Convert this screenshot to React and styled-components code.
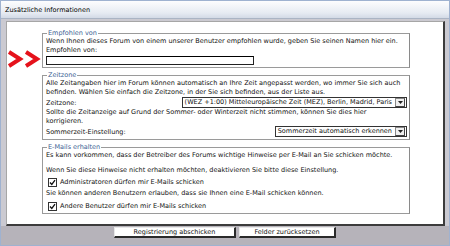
import React from "react";
import styled, { createGlobalStyle } from "styled-components";

const Global = createGlobalStyle`
  html, body { margin: 0; padding: 0; background: #fff; }
  body { font-family: "DejaVu Sans", Verdana, sans-serif; }
`;

const Frame = styled.div`
  width: 450px;
  height: 246px;
  box-sizing: border-box;
  border: 1px solid #9fb2d0;
  display: flex;
  flex-direction: column;
  background: #c9c7cd;
  font-size: 6.5px;
  color: #111;
`;

const TitleBar = styled.div`
  height: 18px;
  box-sizing: border-box;
  padding-left: 4px;
  display: flex;
  align-items: center;
  background: linear-gradient(#fdfdfe, #e6ebf2 70%, #d3dae6);
  border-bottom: 1px solid #aab4c4;
  color: #000;
`;

const Body = styled.div`
  flex: 1;
  display: flex;
  flex-direction: column;
  padding: 2px 4px 0 5px;
  background: #cbcad1;
`;

const Panel = styled.div`
  flex: 1;
  background: #fff;
  border-top: 1px solid #a6a6a6;
  border-left: 1px solid #a6a6a6;
  border-right: 2px solid #3c3c3c;
  border-bottom: 2px solid #3c3c3c;
  display: grid;
  grid-template-columns: 35px 1fr 33px;
  align-content: start;
  padding-top: 7px;
  row-gap: 3px;
`;

const Gutter = styled.div`
  grid-column: 1;
  display: flex;
  align-items: flex-end;
  justify-content: flex-end;
  padding-right: 1px;
`;

const Group = styled.fieldset`
  grid-column: 2;
  margin: 0;
  padding: 0 2px 2px 3px;
  border: 1px solid #9a9a9a;
  border-right-color: #8a8a8a;
  min-width: 0;
`;

const Legend = styled.legend`
  padding: 0 1px;
  margin-left: 1px;
  color: #3c5f94;
  line-height: 8px;
`;

const Line = styled.div`
  line-height: 9px;
  white-space: nowrap;
  margin-top: ${(p) => p.$gap || 0}px;
`;

const TextInput = styled.div`
  width: 206px;
  height: 7px;
  border: 1px solid #222;
  border-top-color: #000;
  margin-top: 1px;
  background: #fff;
`;

const Row = styled.div`
  display: flex;
  align-items: center;
  justify-content: space-between;
  height: 11px;
`;

const Select = styled.div`
  display: flex;
  align-items: center;
  height: 9px;
  border: 1px solid #333;
  background: #fff;
  padding-left: 2px;
  line-height: 9px;
  white-space: nowrap;
`;

const SelectButton = styled.span`
  margin-left: 3px;
  width: 8px;
  height: 7px;
  border: 1px solid #888;
  border-right-color: #444;
  border-bottom-color: #444;
  background: #f0f0f0;
  display: flex;
  align-items: center;
  justify-content: center;
  margin-right: 1px;
`;

const Check = styled.div`
  display: flex;
  align-items: center;
  gap: 3px;
  padding-left: 2px;
  line-height: 9px;
  margin-top: ${(p) => p.$gap || 0}px;
  margin-bottom: ${(p) => p.$after || 0}px;
`;

const Box = styled.span`
  width: 7px;
  height: 7px;
  border: 1px solid #333;
  background: #fff;
  display: flex;
  align-items: center;
  justify-content: center;
`;

const Footer = styled.div`
  height: 19px;
  display: flex;
  align-items: flex-start;
  justify-content: center;
  gap: 3px;
  background: #b6b3ba;
  margin: 0 -4px 0 -5px;
  padding-top: 1px;
  box-sizing: border-box;
`;

const Button = styled.div`
  width: ${(p) => p.$w}px;
  height: 11px;
  box-sizing: border-box;
  background: #fff;
  border: 1px solid #e8e8e8;
  border-right: 2px solid #2a2a2a;
  border-bottom: 2px solid #2a2a2a;
  display: flex;
  align-items: center;
  justify-content: center;
  color: #111;
`;

const Arrows = () => (
  <svg width="34" height="18" viewBox="0 0 34 18">
    <polyline points="2,2 13,9 2,16" fill="none" stroke="#e5121b" strokeWidth="4" strokeLinejoin="miter" />
    <polyline points="19,2 30,9 19,16" fill="none" stroke="#e5121b" strokeWidth="4" strokeLinejoin="miter" />
  </svg>
);

const Caret = () => (
  <svg width="5" height="3" viewBox="0 0 5 3">
    <polygon points="0,0 5,0 2.5,3" fill="#222" />
  </svg>
);

const Tick = () => (
  <svg width="7" height="7" viewBox="0 0 7 7">
    <polyline points="1,3.5 2.8,5.5 6,1.2" fill="none" stroke="#111" strokeWidth="1.3" />
  </svg>
);

export default function App() {
  return (
    <>
      <Global />
      <Frame>
        <TitleBar>Zusätzliche Informationen</TitleBar>
        <Body>
          <Panel>
            <Gutter>
              <Arrows />
            </Gutter>
            <Group>
              <Legend>Empfohlen von</Legend>
              <Line>Wenn Ihnen dieses Forum von einem unserer Benutzer empfohlen wurde, geben Sie seinen Namen hier ein.</Line>
              <Line>Empfohlen von:</Line>
              <TextInput />
            </Group>
            <Group>
              <Legend>Zeitzone</Legend>
              <Line>Alle Zeitangaben hier im Forum können automatisch an Ihre Zeit angepasst werden, wo immer Sie sich auch</Line>
              <Line>befinden. Wählen Sie einfach die Zeitzone, in der Sie sich befinden, aus der Liste aus.</Line>
              <Row>
                <span>Zeitzone:</span>
                <Select>
                  (WEZ +1:00) Mitteleuropäische Zeit (MEZ), Berlin, Madrid, Paris
                  <SelectButton><Caret /></SelectButton>
                </Select>
              </Row>
              <Line>Sollte die Zeitanzeige auf Grund der Sommer- oder Winterzeit nicht stimmen, können Sie dies hier</Line>
              <Line>korrigieren.</Line>
              <Row>
                <span>Sommerzeit-Einstellung:</span>
                <Select>
                  Sommerzeit automatisch erkennen
                  <SelectButton><Caret /></SelectButton>
                </Select>
              </Row>
            </Group>
            <Group>
              <Legend>E-Mails erhalten</Legend>
              <Line>Es kann vorkommen, dass der Betreiber des Forums wichtige Hinweise per E-Mail an Sie schicken möchte.</Line>
              <Line $gap={6}>Wenn Sie diese Hinweise nicht erhalten möchten, deaktivieren Sie bitte diese Einstellung.</Line>
              <Check $gap={3} $after={2}>
                <Box><Tick /></Box>
                Administratoren dürfen mir E-Mails schicken
              </Check>
              <Line>Sie können anderen Benutzern erlauben, dass sie Ihnen eine E-Mail schicken können.</Line>
              <Check $gap={4}>
                <Box><Tick /></Box>
                Andere Benutzer dürfen mir E-Mails schicken
              </Check>
            </Group>
          </Panel>
          <Footer>
            <Button $w={122}>Registrierung abschicken</Button>
            <Button $w={97}>Felder zurücksetzen</Button>
          </Footer>
        </Body>
      </Frame>
    </>
  );
}
